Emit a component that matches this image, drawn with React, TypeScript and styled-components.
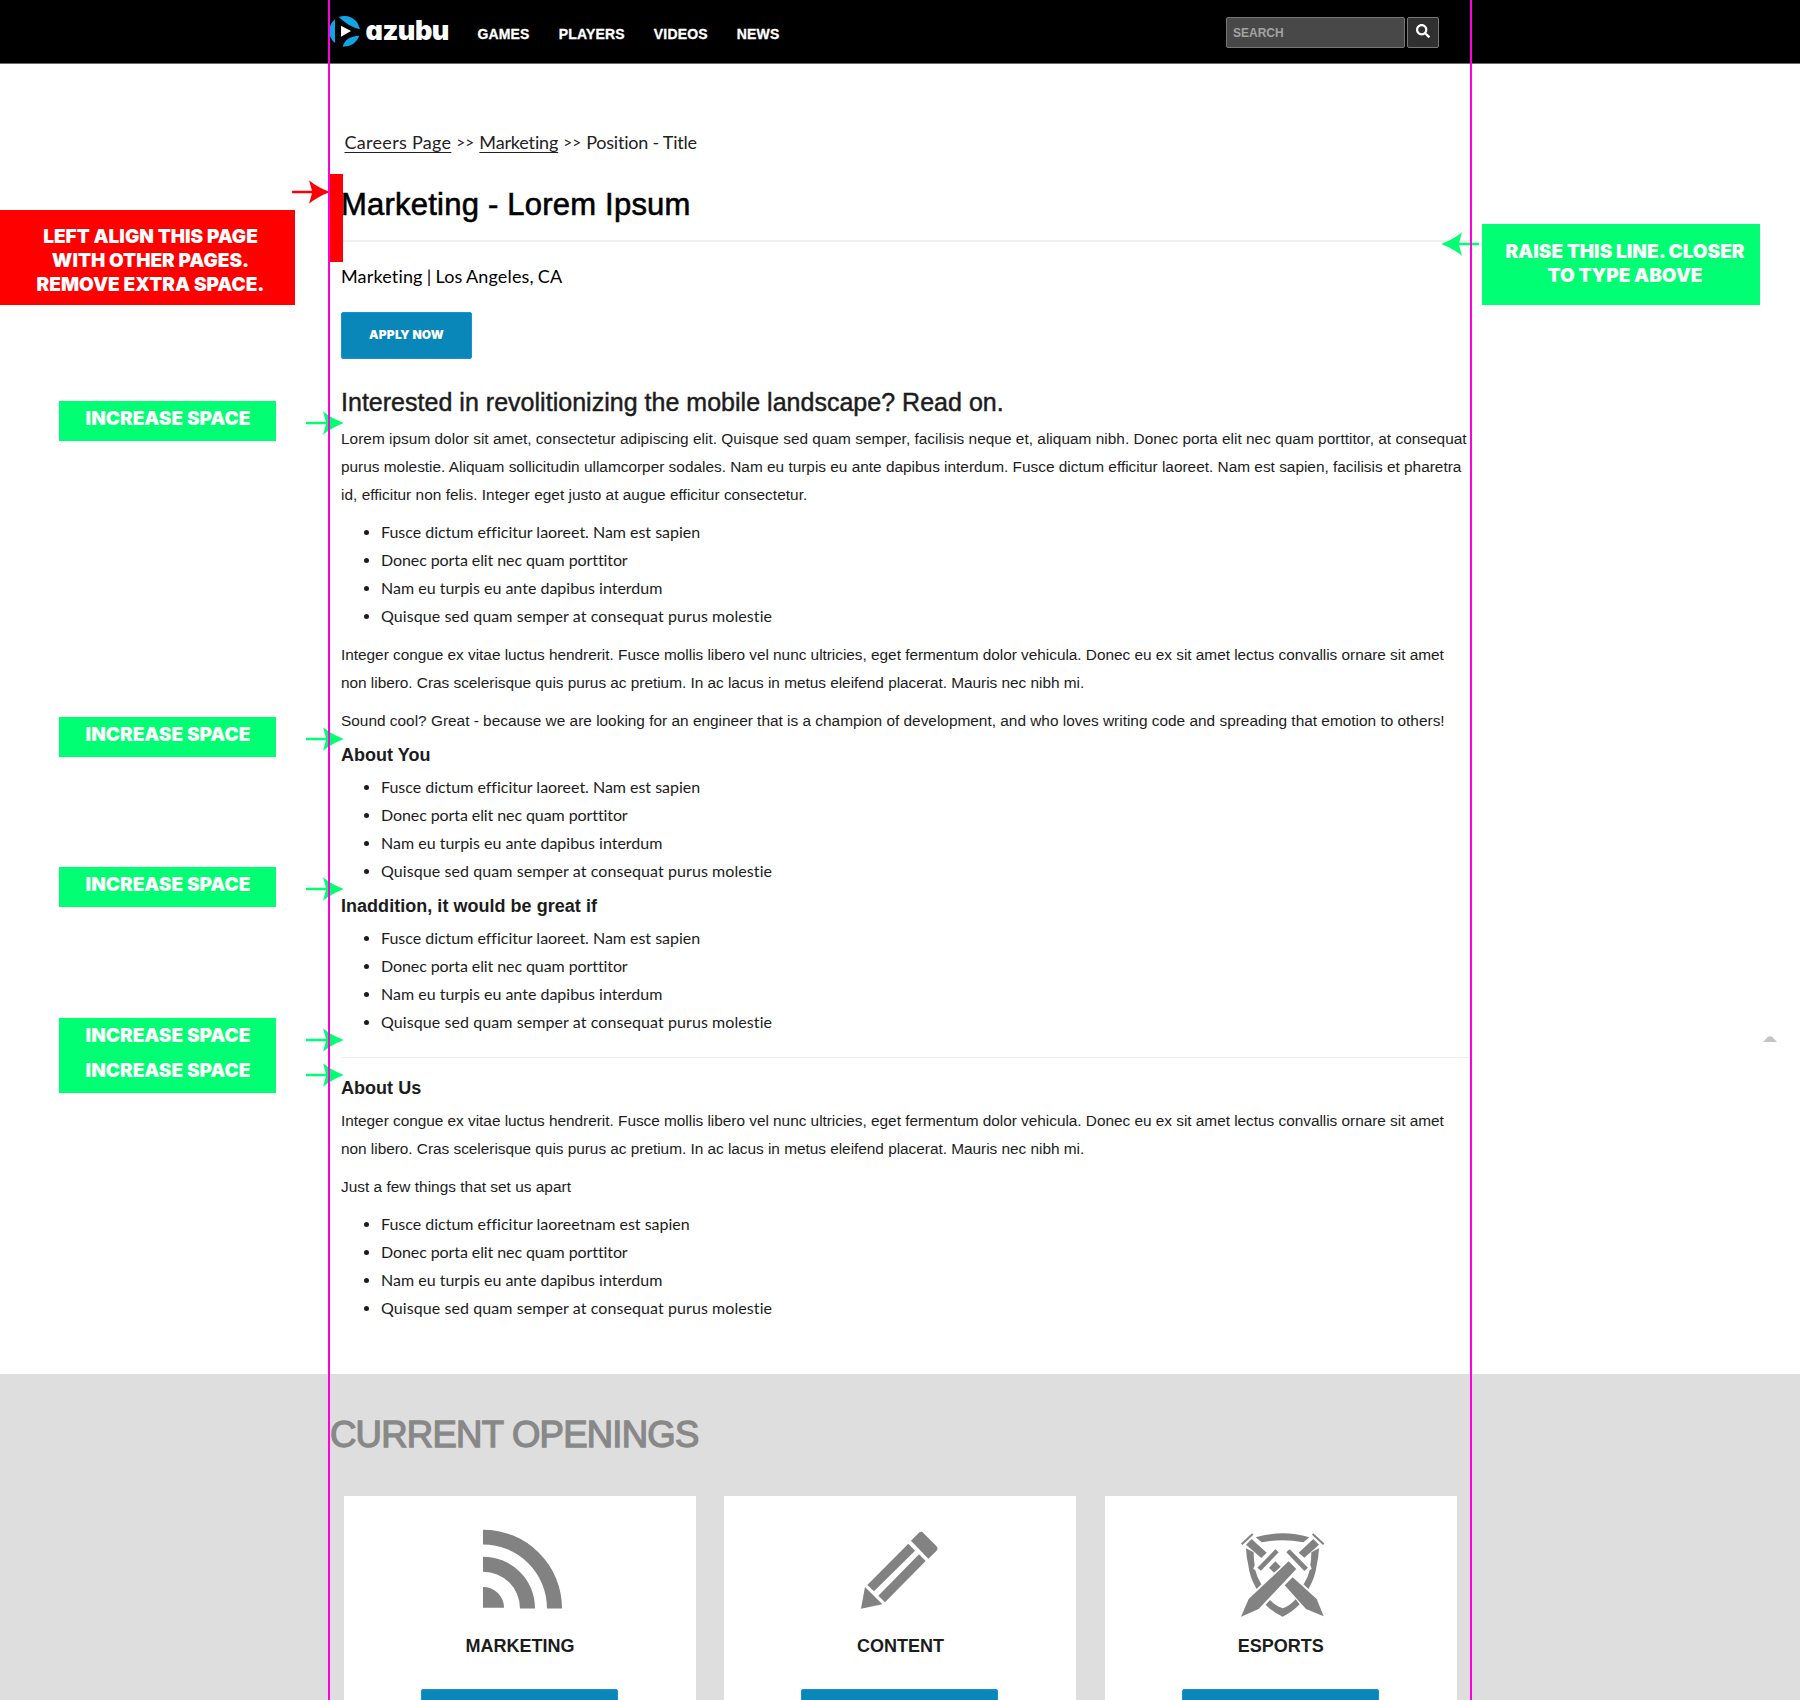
import React from 'react';
import styled, { createGlobalStyle } from 'styled-components';
import { FaSearch } from 'react-icons/fa';

const sans = '"Liberation Sans", Arial, Helvetica, sans-serif';
const rounded = 'Lato, "Liberation Sans", sans-serif';
const heavy = 'Inter, "Liberation Sans", sans-serif';
const green = '#00ff72';
const red = '#ff0000';

const GlobalStyle = createGlobalStyle`
  * { box-sizing: border-box; }
  body { margin: 0; background: #fff; font-family: ${sans}; color: #1c1c1c; }
`;

const Page = styled.div`
  position: relative;
  width: 1800px;
  height: 1700px;
  overflow: hidden;
  background: #fff;
`;

/* ---------- header ---------- */

const Header = styled.header`
  height: 64px;
  background: #000;
  border-bottom: 1px solid #6a6a6a;
`;

const HeaderInner = styled.div`
  display: flex;
  align-items: flex-start;
  width: 1140px;
  margin: 0 auto;
`;

const Logo = styled.div`
  display: flex;
  width: 147.5px;
  padding-top: 15px;
`;

const LogoText = styled.span`
  color: #fff;
  margin-left: 3.5px;
  font: 900 27px/32px ${heavy};
  font-feature-settings: 'cv11';
  letter-spacing: -0.5px;
`;

const Nav = styled.nav`
  display: flex;
  gap: 29.2px;
  padding-top: 24px;
`;

const NavLink = styled.a`
  color: #fff;
  font: bold 14px/20px ${sans};
  letter-spacing: 0.15px;
  -webkit-text-stroke: 0.3px #fff;
`;

const Search = styled.form`
  display: flex;
  gap: 2px;
  margin: 17px 31px 0 auto;
`;

const SearchField = styled.div`
  width: 179px;
  height: 31px;
  padding: 0 6px;
  border: 1px solid #777;
  border-radius: 2px;
  background: #484848;
  color: #a3a3a3;
  font: bold 12px/30px ${sans};
`;

const SearchButton = styled.button`
  display: flex;
  justify-content: center;
  width: 32px;
  height: 31px;
  padding: 6px 0 0;
  border: 1px solid #777;
  border-radius: 2px;
  background: #303030;
  color: #fff;
  font-size: 14px;
`;

/* ---------- job posting ---------- */

const Main = styled.main`
  height: 1310px;
  width: 1129px;
  margin-left: 341px;
  padding-top: 66px;
`;

const Breadcrumb = styled.nav`
  display: flex;
  gap: 5px;
  padding-left: 3.5px;
  color: #222;
  font: 18px/24px ${rounded};
`;

const Crumb = styled.span<{ $link?: boolean; $tracking: number }>`
  letter-spacing: ${(p) => p.$tracking}px;
  text-decoration: ${(p) => (p.$link ? 'underline' : 'none')};
  text-decoration-thickness: 1px;
  text-underline-offset: 3px;
`;

const Chevrons = styled.span`
  font-size: 15.5px;
`;

const Title = styled.h1`
  margin: 33px 0 0;
  color: #000;
  font: 31px/36px ${sans};
  letter-spacing: 0.22px;
  -webkit-text-stroke: 0.6px #000;
`;

const Rule = styled.hr<{ $top: number; $height: number }>`
  height: ${(p) => p.$height}px;
  margin: ${(p) => p.$top}px 0 0;
  border: 0;
  background: #efefef;
`;

const Location = styled.p`
  margin: 22px 0 24px;
  color: #000;
  font: 18px/24px ${rounded};
  letter-spacing: 0.16px;
  word-spacing: -0.7px;
`;

const ApplyButton = styled.button`
  display: block;
  width: 131px;
  height: 47px;
  padding: 0 0 2px;
  border: 1px solid #1a8fdc;
  border-radius: 2px;
  background: #0887b8;
  color: #fff;
  font: 900 12px/20px ${heavy};
  letter-spacing: 0.2px;
`;

const Lead = styled.h2`
  margin: 28px 0 0;
  font: 25px/30px ${sans};
  letter-spacing: 0.02px;
  -webkit-text-stroke: 0.45px #1c1c1c;
`;

const Paragraph = styled.p<{ $top: number }>`
  margin: ${(p) => p.$top}px 0 0;
  font: 15.4px/28px ${sans};
  white-space: nowrap;
`;

const Line = styled.span<{ $tracking: number }>`
  display: block;
  letter-spacing: ${(p) => p.$tracking}px;
`;

const Heading = styled.h3<{ $top: number }>`
  margin: ${(p) => p.$top}px 0 0;
  font: bold 18px/24px ${sans};
  letter-spacing: 0.03px;
`;

const List = styled.ul<{ $top: number }>`
  margin: ${(p) => p.$top}px 0 0;
  padding: 0;
  list-style: none;
`;

const Item = styled.li<{ $tracking: number }>`
  display: flex;
  align-items: center;
  padding-left: 23px;
  font: 16px/28px ${rounded};
  letter-spacing: ${(p) => p.$tracking}px;

  &::before {
    content: '';
    width: 5px;
    height: 5px;
    margin-right: 12px;
    border-radius: 50%;
    background: #1c1c1c;
  }
`;

/* ---------- openings ---------- */

const Openings = styled.section`
  height: 326px;
  padding: 38px 0 0 330px;
  background: #dedede;
`;

const OpeningsTitle = styled.h2`
  margin: 0;
  color: #888;
  font: 36.5px/46px ${sans};
  letter-spacing: -0.75px;
  -webkit-text-stroke: 1.3px #888;
`;

const Cards = styled.div`
  display: grid;
  grid-template-columns: repeat(3, 352px);
  gap: 28.4px;
  margin: 38px 0 0 14px;
`;

const Card = styled.article`
  display: flex;
  flex-direction: column;
  align-items: center;
  height: 320px;
  padding-top: 24px;
  background: #fff;
`;

const CardTitle = styled.h3`
  margin: 14px 0 31px;
  font: bold 18px/24px ${sans};
`;

const CardButton = styled.div`
  width: 197px;
  height: 47px;
  margin-right: 1px;
  border: 1px solid #1a8fdc;
  border-radius: 2px;
  background: #0887b8;
`;

/* ---------- review notes laid over the page ---------- */

const Guide = styled.div<{ $x: number }>`
  position: absolute;
  top: 0;
  left: ${(p) => p.$x}px;
  width: 2px;
  height: 1700px;
  background: #ff00dc;
`;

const Note = styled.div<{ $x: number; $y: number; $w: number; $h: number; $color: string; $pad: string }>`
  position: absolute;
  left: ${(p) => p.$x}px;
  top: ${(p) => p.$y}px;
  width: ${(p) => p.$w}px;
  height: ${(p) => p.$h}px;
  padding: ${(p) => p.$pad};
  background: ${(p) => p.$color};
  color: #fff;
  font: 900 19px/24px ${heavy};
  text-align: center;
  white-space: nowrap;
`;

const ExtraSpace = styled.div`
  position: absolute;
  left: 330px;
  top: 174px;
  width: 13px;
  height: 88px;
  background: ${red};
`;

const ArrowSvg = styled.svg<{ $x: number; $y: number; $flip?: boolean }>`
  position: absolute;
  left: ${(p) => p.$x}px;
  top: ${(p) => p.$y - 12}px;
  transform: ${(p) => (p.$flip ? 'scaleX(-1)' : 'none')};
`;

const BackToTop = styled.svg`
  position: absolute;
  left: 1763px;
  top: 1036px;
`;

function Arrow({ x, y, color, flip }: { x: number; y: number; color: string; flip?: boolean }) {
  return (
    <ArrowSvg $x={x} $y={y} $flip={flip} width="38" height="24" fill={color}>
      <path d="M0 10.700H20L17 .2Q25 7 37.800 12Q25 17 17 23.800L20 13.300H0Z" />
    </ArrowSvg>
  );
}

function LogoMark() {
  return (
    <svg width="32" height="33" viewBox="14 30 96 99">
      <g fill="#0ea5e6">
        <path d="M29 43V114A45 45 0 0 1 29 43Z" />
        <path d="M40 36Q53 31 68 34Q96 41 104 73Q70 65 40 36Z" />
        <path d="M102 92Q91 124 52 125Q60 94 102 92Z" />
      </g>
      <path d="M47 62L77 78L47 95Z" fill="#fff" />
    </svg>
  );
}

function FeedIcon() {
  return (
    <svg width="100" height="100" fill="#828282">
      <path d="M13 9.700A78.700 78.700 0 0 1 92 88.400H77A64 64 0 0 0 13 24.400Z" />
      <path d="M13 36.700A51.700 51.700 0 0 1 65 88.400H50A36.700 36.700 0 0 0 13 51.700Z" />
      <path d="M13 67A20.700 20.700 0 0 1 34 87.700H13Z" />
    </svg>
  );
}

function PencilIcon() {
  return (
    <svg width="100" height="100" viewBox="91 120 300 300" fill="#828282">
      <path d="M274 182L297 159Q304 152 311 159L350 198Q357 206 350 213L326 236Z" />
      <path d="M266 191L286 212L163 334L143 315Z" />
      <path d="M298 223L318 243L196 367L176 347Z" />
      <path d="M136 321L188 373L124 386Z" />
    </svg>
  );
}

function SwordsIcon() {
  return (
    <svg width="100" height="100" viewBox="93 60 300 300" fill="#828282">
      <path d="M167 112Q247 88 328 112L310 127Q247 115 185 127Z" />
      <path d="M138 145L161 157Q161 178 164 196L160 206L166 211Q171 233 184 253L170 267Q149 233 145 196Q139 170 138 145Z" />
      <path d="M357 145L334 157Q334 178 331 196L335 206L329 211Q324 233 311 253L325 267Q346 233 350 196Q356 170 357 145Z" />
      <path d="M210 300Q228 319 248 325Q268 319 287 298L299 313Q275 338 248 350Q220 338 197 314Z" />
      <path d="M155 117L200 158L184 174L138 134Z" />
      <path d="M340 117L357 134L313 173L296 158Z" />
      <path d="M125 133L158 102M371 133L338 102" stroke="#828282" strokeWidth="6" />
      <path d="M226 148L236 157L183 212L172 203Z" />
      <path d="M269 148L324 203L313 213L259 157Z" />
      <path d="M226 184L242 200L222 218L207 203Z" />
      <path d="M266 184L289 207L176 327L123 350L146 297Z" />
      <path d="M278 232L350 297L371 349L318 327L254 256Z" />
    </svg>
  );
}

type ListEntry = { text: string; tracking: number };

const duties: ListEntry[] = [
  { text: 'Fusce dictum efficitur laoreet. Nam est sapien', tracking: -0.02 },
  { text: 'Donec porta elit nec quam porttitor', tracking: -0.09 },
  { text: 'Nam eu turpis eu ante dapibus interdum', tracking: 0 },
  { text: 'Quisque sed quam semper at consequat purus molestie', tracking: 0.08 },
];

const perks: ListEntry[] = [
  { text: 'Fusce dictum efficitur laoreetnam est sapien', tracking: -0.01 },
  ...duties.slice(1),
];

function Bullets({ items, top }: { items: ListEntry[]; top: number }) {
  return (
    <List $top={top}>
      {items.map((item) => (
        <Item key={item.text} $tracking={item.tracking}>
          {item.text}
        </Item>
      ))}
    </List>
  );
}

function Congue({ top }: { top: number }) {
  return (
    <Paragraph $top={top}>
      <Line $tracking={-0.025}>
        Integer congue ex vitae luctus hendrerit. Fusce mollis libero vel nunc ultricies, eget fermentum dolor vehicula.
        Donec eu ex sit amet lectus convallis ornare sit amet
      </Line>
      <Line $tracking={-0.025}>
        non libero. Cras scelerisque quis purus ac pretium. In ac lacus in metus eleifend placerat. Mauris nec nibh mi.
      </Line>
    </Paragraph>
  );
}

const spaceNotes = [
  { y: 401, arrow: 423 },
  { y: 717, arrow: 739 },
  { y: 867, arrow: 889 },
  { y: 1018, arrow: 1040 },
  { y: 1053, arrow: 1075 },
];

export default function App() {
  return (
    <Page>
      <GlobalStyle />
      <Header>
        <HeaderInner>
          <Logo>
            <LogoMark />
            <LogoText>azubu</LogoText>
          </Logo>
          <Nav>
            <NavLink>GAMES</NavLink>
            <NavLink>PLAYERS</NavLink>
            <NavLink>VIDEOS</NavLink>
            <NavLink>NEWS</NavLink>
          </Nav>
          <Search>
            <SearchField>SEARCH</SearchField>
            <SearchButton type="button">
              <FaSearch />
            </SearchButton>
          </Search>
        </HeaderInner>
      </Header>

      <Main>
        <Breadcrumb>
          <Crumb $link $tracking={0.3}>Careers Page</Crumb>
          <Chevrons>&gt;&gt;</Chevrons>
          <Crumb $link $tracking={-0.15}>Marketing</Crumb>
          <Chevrons>&gt;&gt;</Chevrons>
          <Crumb $tracking={-0.22}>Position - Title</Crumb>
        </Breadcrumb>
        <Title>Marketing - Lorem Ipsum</Title>
        <Rule $top={17} $height={2} />
        <Location>Marketing | Los Angeles, CA</Location>
        <ApplyButton>APPLY NOW</ApplyButton>
        <Lead>Interested in revolitionizing the mobile landscape? Read on.</Lead>
        <Paragraph $top={8}>
          <Line $tracking={0.025}>
            Lorem ipsum dolor sit amet, consectetur adipiscing elit. Quisque sed quam semper, facilisis neque et,
            aliquam nibh. Donec porta elit nec quam porttitor, at consequat
          </Line>
          <Line $tracking={0}>
            purus molestie. Aliquam sollicitudin ullamcorper sodales. Nam eu turpis eu ante dapibus interdum. Fusce
            dictum efficitur laoreet. Nam est sapien, facilisis et pharetra
          </Line>
          <Line $tracking={0.03}>id, efficitur non felis. Integer eget justo at augue efficitur consectetur.</Line>
        </Paragraph>
        <Bullets items={duties} top={9} />
        <Congue top={11} />
        <Paragraph $top={10}>
          <Line $tracking={0.005}>
            Sound cool? Great - because we are looking for an engineer that is a champion of development, and who loves
            writing code and spreading that emotion to others!
          </Line>
        </Paragraph>
        <Heading $top={8}>About You</Heading>
        <Bullets items={duties} top={6} />
        <Heading $top={9}>Inaddition, it would be great if</Heading>
        <Bullets items={duties} top={6} />
        <Rule $top={21} $height={1} />
        <Heading $top={18}>About Us</Heading>
        <Congue top={7} />
        <Paragraph $top={10}>
          <Line $tracking={0.02}>Just a few things that set us apart</Line>
        </Paragraph>
        <Bullets items={perks} top={9} />
      </Main>

      <Openings>
        <OpeningsTitle>CURRENT OPENINGS</OpeningsTitle>
        <Cards>
          <Card>
            <FeedIcon />
            <CardTitle>MARKETING</CardTitle>
            <CardButton />
          </Card>
          <Card>
            <PencilIcon />
            <CardTitle>CONTENT</CardTitle>
            <CardButton />
          </Card>
          <Card>
            <SwordsIcon />
            <CardTitle>ESPORTS</CardTitle>
            <CardButton />
          </Card>
        </Cards>
      </Openings>

      <Note $x={0} $y={210} $w={295} $h={95} $color={red} $pad="15px 0 0 6px">
        LEFT ALIGN THIS PAGE
        <br />
        WITH OTHER PAGES.
        <br />
        REMOVE EXTRA SPACE.
      </Note>
      <Note $x={1482} $y={224} $w={278} $h={81} $color={green} $pad="16px 0 0 8px">
        RAISE THIS LINE. CLOSER
        <br />
        TO TYPE ABOVE
      </Note>
      <ExtraSpace />
      <Arrow x={292} y={192} color={red} />
      <Arrow x={1441} y={244} color={green} flip />
      {spaceNotes.map((note) => (
        <React.Fragment key={note.y}>
          <Note $x={59} $y={note.y} $w={217} $h={40} $color={green} $pad="6px 0 0 1px">
            INCREASE SPACE
          </Note>
          <Arrow x={306} y={note.arrow} color={green} />
        </React.Fragment>
      ))}
      <Guide $x={328} />
      <Guide $x={1470} />
      <BackToTop width="14" height="6" fill="#c4c4c4">
        <path d="M0 6L5 .800Q7 -.500 9 .800L14 6Z" />
      </BackToTop>
    </Page>
  );
}
